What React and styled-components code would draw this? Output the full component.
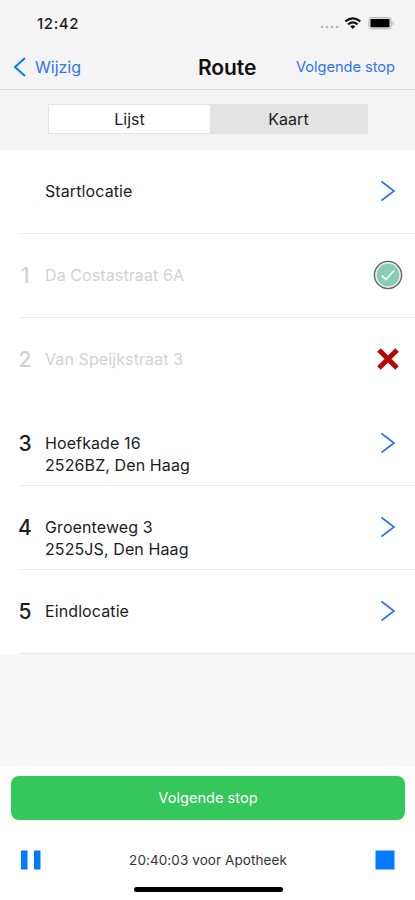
import React from "react"
import styled, { createGlobalStyle } from "styled-components"

const colors = {
  text: "#1c1c1e",
  blue: "#2f74f5",
  iconBlue: "#007aff",
  green: "#34c759",
  bar: "#f4f4f4",
  done: "#d2d2d4",
}

const GlobalStyle = createGlobalStyle`
  * { box-sizing: border-box; }
  body {
    margin: 0;
    font-family: Inter, "Liberation Sans", sans-serif;
    color: ${colors.text};
    background: #fff;
  }
  button {
    border: 0;
    padding: 0;
    background: none;
    font: inherit;
    color: inherit;
  }
`

const Screen = styled.div`
  display: flex;
  flex-direction: column;
  width: 415px;
  height: 900px;
  overflow: hidden;
  background: #f8f8f8;
`

const StatusBar = styled.div`
  display: flex;
  align-items: center;
  justify-content: space-between;
  height: 46px;
  padding: 0 19px 0 37px;
  background: ${colors.bar};
`

const Time = styled.span`
  font-size: 15px;
  font-weight: 500;
  letter-spacing: 0.6px;
`

const NavBar = styled.header`
  display: grid;
  grid-template-columns: 185px auto 1fr;
  align-items: center;
  height: 44px;
  padding: 0 20px 1px 13px;
  border-bottom: 1px solid #dedede;
  background: ${colors.bar};
`

const Back = styled.button`
  display: flex;
  align-items: center;
  gap: 9px;
  color: ${colors.blue};
  font-size: 16px;
`

const Title = styled.h1`
  margin: 0;
  font-size: 21px;
  font-weight: 600;
  letter-spacing: -0.1px;
  color: #111;
`

const NextLink = styled.button`
  justify-self: end;
  color: ${colors.blue};
  font-size: 14.6px;
  letter-spacing: -0.02px;
  white-space: nowrap;
`

const SegmentBar = styled.div`
  height: 60px;
  padding: 14px 47px 0 48px;
  background: ${colors.bar};
`

const Segments = styled.div`
  display: flex;
  height: 30px;
  padding: 1px;
  background: #e3e3e3;
`

const Segment = styled.button`
  width: ${props => (props.$active ? 161 : 157)}px;
  font-size: 16px;
  letter-spacing: 0.05px;
  background: ${props => (props.$active ? "#fff" : "transparent")};
`

const List = styled.ul`
  margin: 0;
  padding: 0;
  list-style: none;
  background: #fff;
`

const Stop = styled.li`
  display: grid;
  grid-template-columns: 25px 1fr 55px;
  height: 84px;
  margin-left: 20px;
  border-bottom: 1px solid ${props => (props.$faint ? "#fdfdfd" : "#ebebeb")};
  color: ${props => (props.$done ? colors.done : colors.text)};
`

const Position = styled.span`
  width: 14px;
  margin-left: -2px;
  padding-top: 31px;
  font-size: 21px;
  line-height: 22px;
  font-weight: 500;
  text-align: center;
`

const Address = styled.div`
  padding-top: 31px;
  font-size: 16px;
  line-height: 21.5px;
  letter-spacing: 0.1px;
`

const StateIcon = styled.div`
  display: flex;
  align-items: center;
  justify-content: center;
  height: 82px;
`

const Footer = styled.footer`
  height: 134px;
  margin-top: auto;
  padding: 10px 10px 0 11px;
  background: #fff;
`

const NextButton = styled.button`
  display: block;
  width: 100%;
  height: 44px;
  border-radius: 8px;
  background: ${colors.green};
  color: #fff;
  font-size: 14.6px;
`

const Timer = styled.div`
  display: grid;
  grid-template-columns: 20px 1fr 20px;
  align-items: center;
  height: 30px;
  margin: 25px 10px 0;
  font-size: 13.5px;
  letter-spacing: 0.08px;
  text-align: center;
  color: #333;
`

const HomeIndicator = styled.div`
  width: 149px;
  height: 5px;
  margin: 12px auto 0;
  border-radius: 3px;
  background: #000;
`

const StatusIcons = () => (
  <svg width="76" height="18" viewBox="0 0 76 18">
    <g fill="#b5b5b5">
      <circle cx="2" cy="13" r="1.3" />
      <circle cx="7" cy="13" r="1.3" />
      <circle cx="12" cy="13" r="1.3" />
      <circle cx="17" cy="13" r="1.3" />
    </g>
    <g fill="none" stroke="#111" strokeWidth="2.1">
      <path d="M25.3 7.4q7.5-6.2 15 0" />
      <path d="M28.1 10.4q4.7-3.9 9.4 0" />
    </g>
    <path d="M30.1 12.2q2.7-2 5.4 0l-2.7 2.9z" fill="#111" />
    <rect x="48.9" y="3.5" width="22.4" height="11.4" rx="3" fill="#ddd" stroke="#b8b8b8" />
    <rect x="50.5" y="5.1" width="19" height="8.2" rx="1" fill="#000" />
    <path d="M72.7 7.1q2 2.1 0 4.2z" fill="#aaa" />
  </svg>
)

const BackIcon = () => (
  <svg width="13" height="20" viewBox="0 0 13 20">
    <path d="M12 1L2 10l10 9" fill="none" stroke={colors.iconBlue} strokeWidth="2" />
  </svg>
)

const ChevronIcon = () => (
  <svg width="16" height="22" viewBox="0 0 16 22">
    <path d="M1.5 1.5L14 11 1.5 20.5" fill="none" stroke={colors.blue} strokeWidth="1.7" />
  </svg>
)

const CheckIcon = () => (
  <svg width="30" height="30" viewBox="0 0 30 30">
    <circle cx="15" cy="15" r="13.6" fill="#e4eae7" stroke="#666" strokeWidth="1.4" />
    <circle cx="15" cy="15" r="11.2" fill="#86ceb3" />
    <path d="M8.8 15.5l4 4 8.4-9" fill="none" stroke="#f2faf7" strokeWidth="1.8" />
  </svg>
)

const CrossIcon = () => (
  <svg width="24" height="24" viewBox="0 0 24 24">
    <path d="M3 3l18 18M21 3L3 21" stroke="#b80505" strokeWidth="5" />
  </svg>
)

const icons = {
  open: ChevronIcon,
  done: CheckIcon,
  failed: CrossIcon,
}

const stops = [
  { lines: ["Startlocatie"], state: "open" },
  { number: 1, lines: ["Da Costastraat 6A"], state: "done" },
  { number: 2, lines: ["Van Speijkstraat 3"], state: "failed" },
  { number: 3, lines: ["Hoefkade 16", "2526BZ, Den Haag"], state: "open" },
  { number: 4, lines: ["Groenteweg 3", "2525JS, Den Haag"], state: "open" },
  { number: 5, lines: ["Eindlocatie"], state: "open" },
]

const StopRow = ({ number, lines, state }) => {
  const Icon = icons[state]
  return (
    <Stop $done={state !== "open"} $faint={state === "failed"}>
      <Position>{number}</Position>
      <Address>
        {lines.map(line => (
          <div key={line}>{line}</div>
        ))}
      </Address>
      <StateIcon>
        <Icon />
      </StateIcon>
    </Stop>
  )
}

export default () => (
  <Screen>
    <GlobalStyle />
    <StatusBar>
      <Time>12:42</Time>
      <StatusIcons />
    </StatusBar>
    <NavBar>
      <Back>
        <BackIcon />
        Wijzig
      </Back>
      <Title>Route</Title>
      <NextLink>Volgende stop</NextLink>
    </NavBar>
    <SegmentBar>
      <Segments>
        <Segment $active>Lijst</Segment>
        <Segment>Kaart</Segment>
      </Segments>
    </SegmentBar>
    <List>
      {stops.map(stop => (
        <StopRow key={stop.lines[0]} {...stop} />
      ))}
    </List>
    <Footer>
      <NextButton>Volgende stop</NextButton>
      <Timer>
        <svg width="20" height="20" viewBox="0 0 20 20" fill={colors.iconBlue}>
          <path d="M0 .5h6.5v19H0zM13 .5h6.5v19H13z" />
        </svg>
        <span>20:40:03 voor Apotheek</span>
        <svg width="20" height="20" viewBox="0 0 20 20" fill={colors.iconBlue}>
          <path d="M.5.5h19v19H.5z" />
        </svg>
      </Timer>
      <HomeIndicator />
    </Footer>
  </Screen>
)
